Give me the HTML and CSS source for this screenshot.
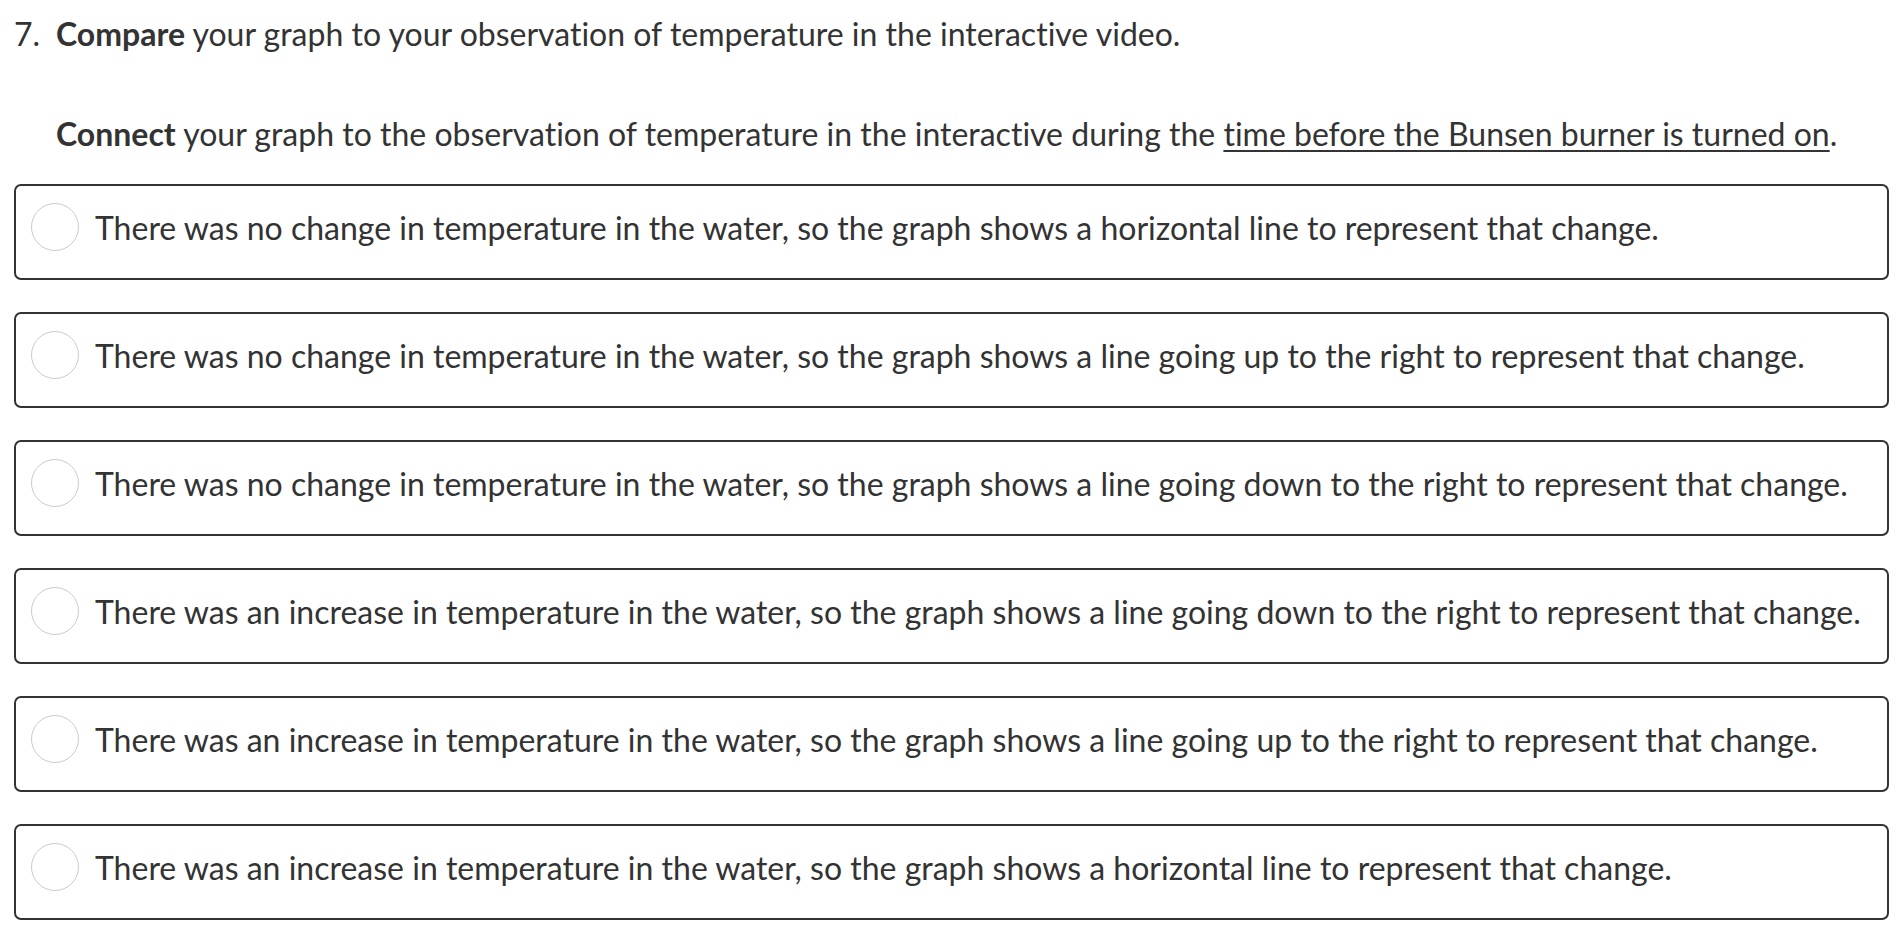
FILE: index.html
```html
<!DOCTYPE html>
<html>
<head>
<meta charset="utf-8">
<link rel="stylesheet" href="styles.css">
</head>
<body>
<div class="question">
  <div class="q-title"><span class="q-num">7.</span><span><strong>Compare</strong> your graph to your observation of temperature in the interactive video.</span></div>
  <p class="q-prompt"><strong>Connect</strong> your graph to the observation of temperature in the interactive during the <u>time before the Bunsen burner is turned on</u>.</p>
  <div class="options">
    <label class="option"><span class="radio"></span><span class="opt-text">There was no change in temperature in the water, so the graph shows a horizontal line to represent that change.</span></label>
    <label class="option"><span class="radio"></span><span class="opt-text">There was no change in temperature in the water, so the graph shows a line going up to the right to represent that change.</span></label>
    <label class="option"><span class="radio"></span><span class="opt-text">There was no change in temperature in the water, so the graph shows a line going down to the right to represent that change.</span></label>
    <label class="option"><span class="radio"></span><span class="opt-text">There was an increase in temperature in the water, so the graph shows a line going down to the right to represent that change.</span></label>
    <label class="option"><span class="radio"></span><span class="opt-text">There was an increase in temperature in the water, so the graph shows a line going up to the right to represent that change.</span></label>
    <label class="option"><span class="radio"></span><span class="opt-text">There was an increase in temperature in the water, so the graph shows a horizontal line to represent that change.</span></label>
  </div>
</div>
</body>
</html>
```
FILE: styles.css
```css
html, body {
  margin: 0;
  padding: 0;
  background: #ffffff;
}
body {
  font-family: Lato, "Open Sans", sans-serif;
  color: #333333;
  font-variant-ligatures: no-common-ligatures;
}
.question {
  padding: 0 10px 0 14px;
}
.q-title {
  display: flex;
  font-size: 32px;
  line-height: 44px;
  margin-top: 12px;
}
.q-num {
  width: 42px;
  flex: none;
}
.q-prompt {
  margin: 56px 0 0 42px;
  font-size: 32px;
  line-height: 44px;
}
.q-prompt u {
  text-decoration-thickness: 2px;
  text-underline-offset: 4px;
}
.options {
  display: flex;
  flex-direction: column;
  gap: 32px;
  margin-top: 28px;
}
.option {
  display: flex;
  align-items: center;
  gap: 16px;
  border: 2px solid #333333;
  border-radius: 7px;
  padding: 17px 14px 27px 15px;
  height: 48px;
}
.radio {
  width: 46px;
  height: 46px;
  border: 1px solid #cccccc;
  border-radius: 50%;
  flex: none;
}
.opt-text {
  font-size: 32px;
  line-height: 40px;
  padding-top: 2px;
}
```
